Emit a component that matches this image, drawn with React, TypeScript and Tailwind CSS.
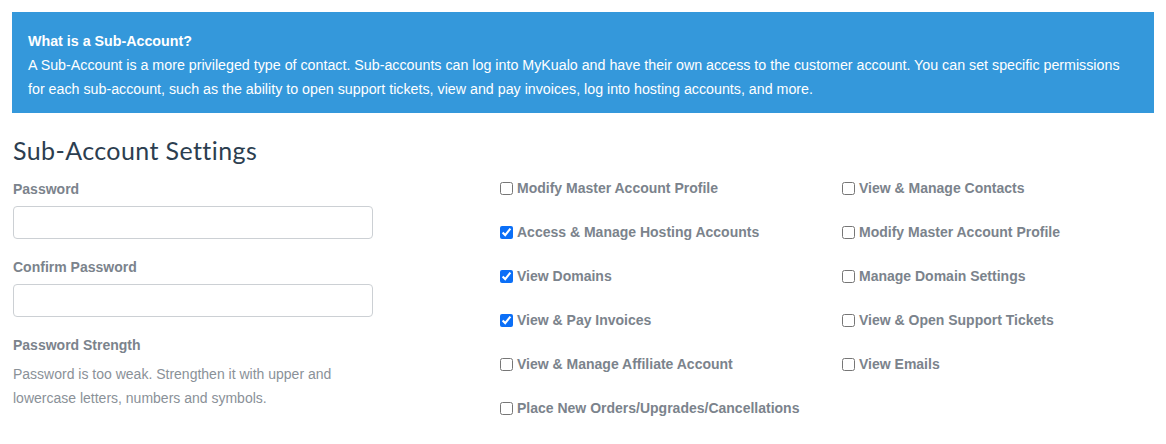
import { useState } from "react";

const leftPerms = [
  { label: "Modify Master Account Profile", checked: false },
  { label: "Access & Manage Hosting Accounts", checked: true },
  { label: "View Domains", checked: true },
  { label: "View & Pay Invoices", checked: true },
  { label: "View & Manage Affiliate Account", checked: false },
  { label: "Place New Orders/Upgrades/Cancellations", checked: false },
];

const rightPerms = [
  { label: "View & Manage Contacts", checked: false },
  { label: "Modify Master Account Profile", checked: false },
  { label: "Manage Domain Settings", checked: false },
  { label: "View & Open Support Tickets", checked: false },
  { label: "View Emails", checked: false },
];

function Perm({ label, checked }: { label: string; checked: boolean }) {
  const [on, setOn] = useState(checked);
  return (
    <label className="flex items-center gap-[4px] h-[44px] text-[14px] font-bold text-[#7b838c] leading-none">
      <input
        type="checkbox"
        checked={on}
        onChange={() => setOn(!on)}
        className="w-[13px] h-[13px] m-0 accent-[#0b6ff7]"
      />
      <span>{label}</span>
    </label>
  );
}

export default function App() {
  return (
    <div className="bg-white px-[12px] pt-[12px] font-['Liberation_Sans',Arial,sans-serif]">
      {/* Info box */}
      <div className="bg-[#3498db] text-white pl-[16px] pr-[30px] pt-[17px] pb-[12px] text-[14.25px] leading-[24px]">
        <p className="font-bold">What is a Sub-Account?</p>
        <p>
          A Sub-Account is a more privileged type of contact. Sub-accounts can log into MyKualo and have their own
          access to the customer account. You can set specific permissions for each sub-account, such as the ability
          to open support tickets, view and pay invoices, log into hosting accounts, and more.
        </p>
      </div>

      <h2 className="mt-[22px] ml-[1px] text-[25px] leading-[30px] text-[#2c3e50] font-['Lato','Open_Sans',sans-serif] tracking-[0.4px]">
        Sub-Account Settings
      </h2>

      <div className="flex mt-[8px]">
        {/* Password column */}
        <div className="w-[360px] ml-[1px]">
          <label className="block text-[14px] font-bold text-[#7b838c] leading-[18px] mt-[7px]">Password</label>
          <input
            type="password"
            className="block w-full h-[33px] mt-[8px] rounded-[4px] border border-[#ccd0d4] bg-white"
          />
          <label className="block text-[14px] font-bold text-[#7b838c] leading-[18px] mt-[19px]">Confirm Password</label>
          <input
            type="password"
            className="block w-full h-[33px] mt-[8px] rounded-[4px] border border-[#ccd0d4] bg-white"
          />
          <p className="text-[14px] font-bold text-[#7b838c] leading-[18px] mt-[19px]">Password Strength</p>
          <p className="text-[14px] text-[#8a9198] leading-[24px] mt-[8px]">
            Password is too weak. Strengthen it with upper and lowercase letters, numbers and symbols.
          </p>
        </div>

        {/* Permissions */}
        <div className="ml-[127px] w-[342px] -mt-[7px]">
          {leftPerms.map((p) => (
            <Perm key={p.label} label={p.label} checked={p.checked} />
          ))}
        </div>
        <div className="-mt-[7px]">
          {rightPerms.map((p) => (
            <Perm key={p.label + "r"} label={p.label} checked={p.checked} />
          ))}
        </div>
      </div>
    </div>
  );
}
